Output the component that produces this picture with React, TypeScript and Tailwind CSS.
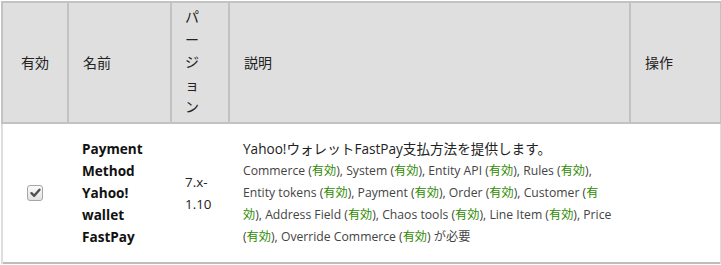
import { Fragment } from "react";

const deps = [
  "Commerce",
  "System",
  "Entity API",
  "Rules",
  "Entity tokens",
  "Payment",
  "Order",
  "Customer",
  "Address Field",
  "Chaos tools",
  "Line Item",
  "Price",
  "Override Commerce",
];

const font = "font-['Open_Sans','Noto_Sans_CJK_JP',sans-serif]";

export default function App() {
  return (
    <div className={`bg-white w-[721px] h-[265px] pt-px pl-px ${font}`}>
      <table className="table-fixed border-collapse w-[719px] text-[#222]">
        <colgroup>
          <col className="w-[66px]" />
          <col className="w-[103px]" />
          <col className="w-[58px]" />
          <col className="w-[401px]" />
          <col className="w-[91px]" />
        </colgroup>
        <thead>
          <tr className="bg-[#dfdfdf] h-[120px] text-[14px] font-normal">
            <th className="border-2 border-[#c2c2c2] font-normal text-center align-middle">有効</th>
            <th className="border-2 border-[#c2c2c2] font-normal text-left px-[14px] align-middle">名前</th>
            <th className="border-2 border-[#c2c2c2] font-normal text-left px-[13px] py-[3px] align-middle leading-[22.5px]">
              <span className="inline-block w-[15px] [word-break:break-all] [line-break:anywhere]">パージョン</span>
            </th>
            <th className="border-2 border-[#c2c2c2] font-normal text-left px-[14px] align-middle">説明</th>
            <th className="border-2 border-[#c2c2c2] font-normal text-left px-[14px] align-middle">操作</th>
          </tr>
        </thead>
        <tbody>
          <tr className="h-[140px] border-b-2 border-b-[#bdbdbd]">
            <td className="border-l-2 border-l-[#dedede] align-middle pl-[24px]">
              <div className="w-[16px] h-[16px] rounded-[3px] border border-[#a6a6a6] bg-gradient-to-b from-[#fbfbfb] to-[#e2e2e2] flex items-center justify-center">
                <svg width="11" height="10" viewBox="0 0 11 10">
                  <path d="M1.5 5.2 L4.2 7.8 L9.5 1.8" fill="none" stroke="#505050" strokeWidth="2.4" strokeLinecap="round" strokeLinejoin="round" />
                </svg>
              </div>
            </td>
            <td className="px-[14px] align-middle font-bold text-[13.6px] leading-[22px] text-[#111]">
              Payment Method Yahoo! wallet FastPay
            </td>
            <td className="px-[14px] align-middle text-[13.4px] leading-[22px] text-[#222]">
              <span className="inline-block w-[30px]">7.x-1.10</span>
            </td>
            <td className="px-[14px] align-middle">
              <div className="text-[13.6px] leading-[22px] text-[#222]">Yahoo!ウォレットFastPay支払方法を提供します。</div>
              <div className="text-[12.2px] leading-[22px] text-[#444]">
                {deps.map((d, i) => (
                  <Fragment key={d}>
                    {d} (<span className="text-[#2f8a00]">有効</span>)
                    {i < deps.length - 1 ? ", " : " が必要"}
                  </Fragment>
                ))}
              </div>
            </td>
            <td className="border-r-2 border-r-[#dedede] align-middle"></td>
          </tr>
        </tbody>
      </table>
    </div>
  );
}
